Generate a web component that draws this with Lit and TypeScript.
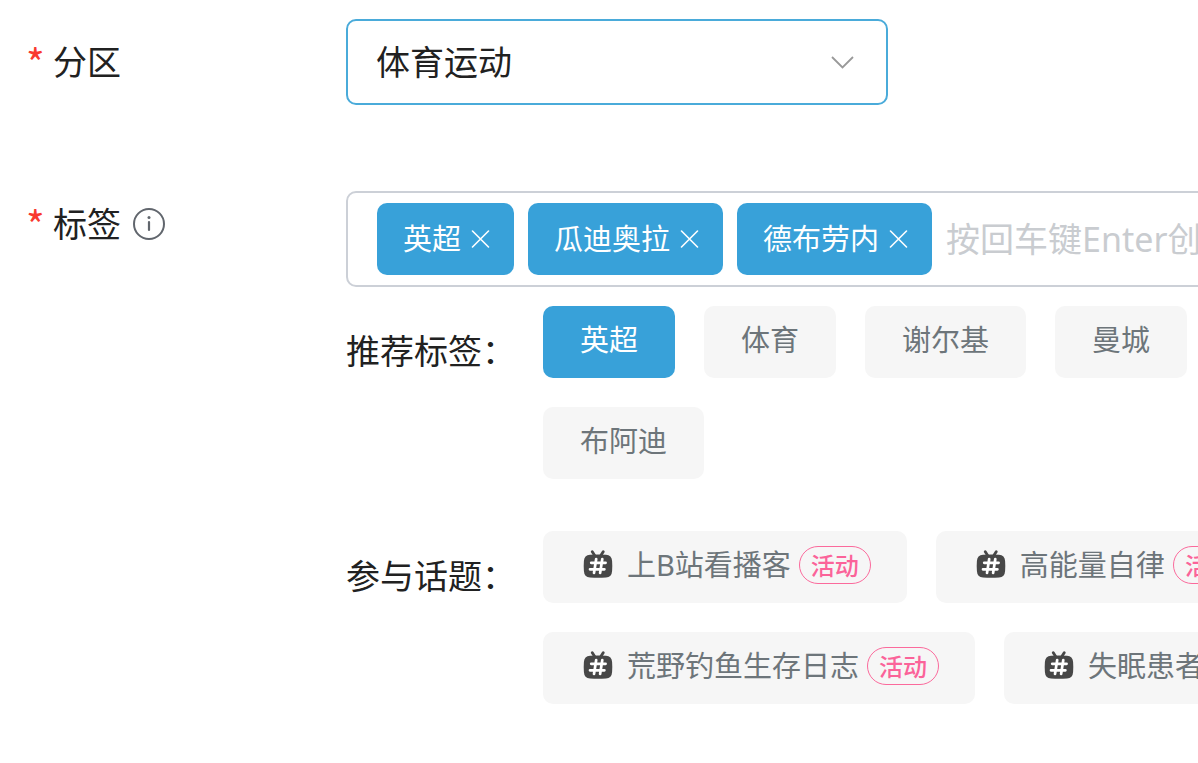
import { LitElement, html, css } from "lit";
import { customElement, property, state } from "lit/decorators.js";
import { classMap } from "lit/directives/class-map.js";

@customElement("tag-chip")
class TagChip extends LitElement {
  static styles = css`
    :host {
      display: block;
    }
    .chip {
      display: flex;
      align-items: center;
      box-sizing: border-box;
      height: 72px;
      gap: 10px;
      padding: 0 24px 0 26px;
      border-radius: 10px;
      background: #38a1d9;
      color: #fff;
      font-size: 29px;
      line-height: 40px;
      white-space: nowrap;
    }
    .remove {
      display: flex;
      margin: 0;
      padding: 0;
      border: 0;
      background: none;
      color: inherit;
      cursor: pointer;
    }
  `;

  @property() label = "";

  private remove() {
    this.dispatchEvent(new CustomEvent("remove", { detail: this.label }));
  }

  render() {
    return html`
      <span class="chip">
        <span>${this.label}</span>
        <button class="remove" type="button" aria-label="删除${this.label}" @click=${this.remove}>
          <svg width="19" height="18" viewBox="0 0 19 18" fill="none" stroke="currentColor" stroke-width="1.6" stroke-linecap="round">
            <path d="M1.500 1L17.500 17M17.500 1L1.500 17" />
          </svg>
        </button>
      </span>
    `;
  }
}

@customElement("topic-chip")
class TopicChip extends LitElement {
  static styles = css`
    :host {
      display: block;
    }
    .chip {
      display: flex;
      align-items: center;
      height: 72px;
      margin: 0;
      padding: 0 36px 4px 40px;
      border: 0;
      border-radius: 10px;
      background: #f6f6f6;
      color: #6d757a;
      font: inherit;
      font-size: 29px;
      line-height: 40px;
      white-space: nowrap;
      cursor: pointer;
    }
    .icon {
      flex: none;
      margin-right: 14px;
    }
    .badge {
      box-sizing: border-box;
      width: 72px;
      height: 38px;
      margin-left: 8px;
      border: 1px solid #fb6a9c;
      border-radius: 19px;
      color: #fb6399;
      font-size: 24px;
      font-weight: 500;
      line-height: 38px;
      text-align: center;
    }
  `;

  @property() label = "";

  render() {
    return html`
      <button class="chip" type="button">
        <svg class="icon" width="30" height="30" viewBox="0 0 30 30" fill="none" stroke-linecap="round">
          <path d="M9.300 1.800L12 6M20.200 1.800L17.500 6" stroke="#474747" stroke-width="2.800" />
          <path
            d="M7 4.800Q15 4.200 23 4.800Q28.800 5.200 29.100 11Q29.500 16 29.100 21Q28.800 27.100 23 27.500Q15 28.100 7 27.500Q1.200 27.100 0.900 21Q0.500 16 0.900 11Q1.200 5.200 7 4.800Z"
            fill="#474747"
          />
          <path d="M8.200 12.800H22.600M7 19.300H21.400M13.200 9L11 23M19.300 9L17.100 23" stroke="#fff" stroke-width="2.700" />
        </svg>
        <span>${this.label}</span>
        <span class="badge">活动</span>
      </button>
    `;
  }
}

@customElement("app-root")
class AppRoot extends LitElement {
  static styles = css`
    :host {
      display: block;
      overflow: hidden;
      background: #fff;
      color: #212121;
      font-family: "Noto Sans", "Noto Sans CJK SC", sans-serif;
      font-size: 34px;
      line-height: 48px;
    }
    .form {
      display: grid;
      row-gap: 86px;
      box-sizing: border-box;
      min-width: 1380px;
      padding: 19px 24px 48px 26px;
    }
    .row {
      display: grid;
      grid-template-columns: 320px minmax(0, 1fr);
      align-items: start;
    }
    .caption {
      display: flex;
      align-items: center;
      height: 66px;
    }
    .caption.tall {
      height: 86px;
    }
    .star {
      width: 27px;
      color: #f9392f;
      font-family: "Noto Sans CJK SC", sans-serif;
      font-size: 40px;
    }
    .info {
      display: flex;
      margin: 0 0 0 12px;
      padding: 0;
      border: 0;
      background: none;
      color: #61666d;
    }
    .select {
      display: grid;
      grid-template-columns: 1fr 57px;
      align-items: center;
      width: 542px;
    }
    .select select {
      grid-area: 1 / 1 / 2 / 3;
      box-sizing: border-box;
      width: 100%;
      height: 86px;
      margin: 0;
      padding: 0 64px 0 28px;
      border: 2px solid #4aabda;
      border-radius: 10px;
      outline: none;
      appearance: none;
      background: #fff;
      color: inherit;
      font: inherit;
    }
    .arrow {
      grid-area: 1 / 2;
      pointer-events: none;
    }
    .tags {
      display: flex;
      align-items: center;
      gap: 14px;
      box-sizing: border-box;
      height: 96px;
      padding: 0 29px;
      border: 2px solid #ccd0d7;
      border-radius: 10px;
    }
    .entry {
      flex: 1;
      min-width: 0;
      height: 72px;
      margin: 0;
      padding: 0;
      border: 0;
      outline: none;
      background: none;
      color: inherit;
      font: inherit;
    }
    .entry::placeholder {
      color: #c9ccd0;
      opacity: 1;
    }
    .group {
      display: grid;
      grid-template-columns: 197px minmax(0, 1fr);
      margin-top: 19px;
    }
    .group + .group {
      margin-top: 52px;
    }
    .heading {
      margin: 0;
      padding-top: 21px;
      font: inherit;
      white-space: nowrap;
    }
    .list {
      display: flex;
      flex-wrap: wrap;
      gap: 29px;
    }
    .option {
      height: 72px;
      margin: 0;
      padding: 0 37px 4px;
      border: 0;
      border-radius: 10px;
      background: #f6f6f6;
      color: #6d757a;
      font: inherit;
      font-size: 29px;
      line-height: 40px;
      cursor: pointer;
    }
    .option.on {
      background: #38a1d9;
      color: #fff;
    }
  `;

  @state() private tags = ["英超", "瓜迪奥拉", "德布劳内"];

  private suggested = ["英超", "体育", "谢尔基", "曼城", "布阿迪"];
  private topics = ["上B站看播客", "高能量自律", "荒野钓鱼生存日志", "失眠患者"];

  private drop(tag: string) {
    this.tags = this.tags.filter((t) => t !== tag);
  }

  private toggle(tag: string) {
    this.tags = this.tags.includes(tag) ? this.tags.filter((t) => t !== tag) : [...this.tags, tag];
  }

  private enter(e: KeyboardEvent) {
    const box = e.target as HTMLInputElement;
    const value = box.value.trim();
    if (e.key !== "Enter" || !value) return;
    e.preventDefault();
    if (!this.tags.includes(value)) this.tags = [...this.tags, value];
    box.value = "";
  }

  render() {
    return html`
      <form class="form">
        <div class="row">
          <div class="caption tall">
            <span class="star">*</span>
            <label for="zone">分区</label>
          </div>
          <div class="select">
            <select id="zone">
              <option>体育运动</option>
            </select>
            <svg class="arrow" width="24" height="14" viewBox="0 0 24 14" fill="none" stroke="#999" stroke-width="1.8">
              <path d="M1 2L11.500 12.500L22 2" />
            </svg>
          </div>
        </div>
        <div class="row">
          <div class="caption">
            <span class="star">*</span>
            <label for="tag">标签</label>
            <button class="info" type="button" aria-label="标签说明">
              <svg width="32" height="32" viewBox="0 0 32 32" fill="none" stroke="currentColor" stroke-width="2">
                <circle cx="16" cy="16" r="15" />
                <path d="M16 14V22" stroke-width="2.200" stroke-linecap="round" />
                <circle cx="16" cy="9.500" r="1.500" fill="currentColor" stroke="none" />
              </svg>
            </button>
          </div>
          <div>
            <div class="tags">
              ${this.tags.map((t) => html`<tag-chip .label=${t} @remove=${() => this.drop(t)}></tag-chip>`)}
              <input id="tag" class="entry" type="text" placeholder="按回车键Enter创建标签" @keydown=${this.enter} />
            </div>
            <section class="group">
              <h2 class="heading">推荐标签：</h2>
              <div class="list">
                ${this.suggested.map(
                  (t) => html`<button
                    type="button"
                    class=${classMap({ option: true, on: this.tags.includes(t) })}
                    @click=${() => this.toggle(t)}
                  >${t}</button>`
                )}
              </div>
            </section>
            <section class="group">
              <h2 class="heading">参与话题：</h2>
              <div class="list">
                ${this.topics.map((t) => html`<topic-chip .label=${t}></topic-chip>`)}
              </div>
            </section>
          </div>
        </div>
      </form>
    `;
  }
}
